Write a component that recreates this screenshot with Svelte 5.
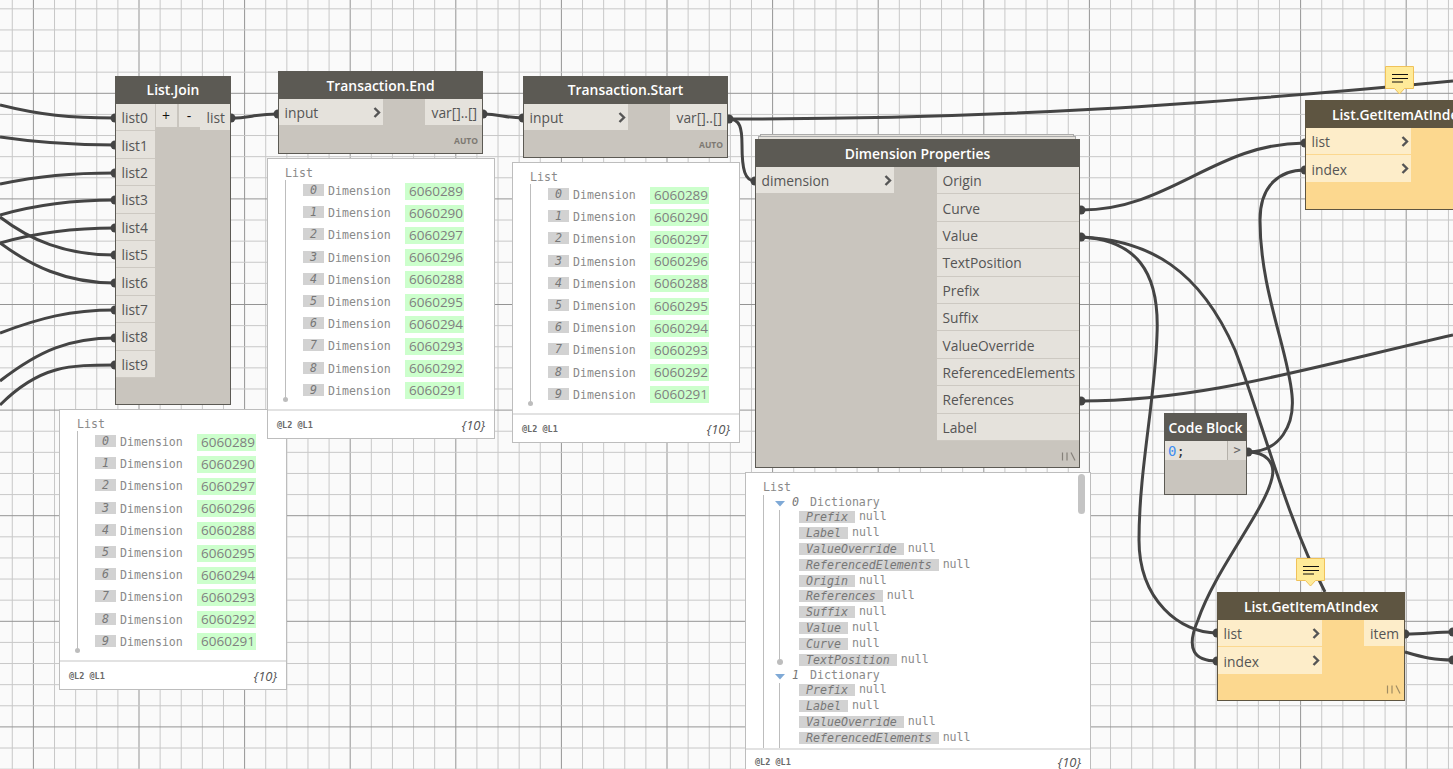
<script>
  const W = 1453, H = 769;
  const step = 21.12;
  const vLines = [];
  for (let k = -1; k < 70; k++) vLines.push({ p: 33.4 + step * k, major: k % 5 === 0 });
  const hLines = [];
  for (let k = -9; k < 29; k++) hLines.push({ p: 198.9 + step * k, major: k % 5 === 0 });

  const wires = [
    'M0,105 C40,115 70,118 115,118',
    'M0,137 C40,143 70,145 115,145',
    'M0,184 C40,176 70,173 115,173',
    'M0,215 C35,205 70,200 115,200',
    'M0,243 C35,233 70,228 115,228',
    'M0,217 C30,240 65,255 115,255',
    'M0,243 C30,265 65,283 115,283',
    'M0,333 C40,318 70,310 115,310',
    'M0,381 C40,350 70,338 115,338',
    'M0,405 C40,365 70,365 115,365',
    'M231,118 C250,118 255,114 278,114',
    'M483,114 C500,114 505,118 523,118',
    'M729,119 C1000,119 1200,105 1453,81',
    'M729,119 C740,119 742,128 742,145 C742,170 745,181 755,181',
    'M1081,210 C1170,210 1215,143 1305,143',
    'M1081,237 C1135,240 1160,270 1157,335 C1155,400 1139,470 1139,540 C1139,600 1180,633 1217,633',
    'M1081,237 C1150,240 1200,270 1235,350 C1262,420 1285,515 1325,592',
    'M1081,401 C1200,401 1300,370 1453,335',
    'M1248,452 C1280,452 1295,425 1292,395 C1288,350 1260,290 1260,220 C1260,185 1280,170 1305,170',
    'M1248,452 C1265,452 1276,462 1272,478 C1265,510 1215,570 1198,620 C1185,650 1195,661 1217,661',
    'M1405,634 C1425,634 1435,632 1453,632',
    'M1405,652 C1425,658 1435,660 1453,660'
  ];
  const dots = [
    [115,118],[115,145],[115,173],[115,200],[115,228],[115,255],[115,283],[115,310],[115,338],[115,365],
    [231,118],[278,114],[483,114],[523,118],[729,119],[755,181],[1081,210],[1081,237],[1081,401],
    [1305,143],[1305,170],[1248,452],[1217,633],[1217,661],[1405,634],[1453,632],[1453,660]
  ];

  const listJoin = ['list0','list1','list2','list3','list4','list5','list6','list7','list8','list9'];
  const dimOutputs = ['Origin','Curve','Value','TextPosition','Prefix','Suffix','ValueOverride','ReferencedElements','References','Label'];
  const values = ['6060289','6060290','6060297','6060296','6060288','6060295','6060294','6060293','6060292','6060291'];
  const keys = ['Prefix','Label','ValueOverride','ReferencedElements','Origin','References','Suffix','Value','Curve','TextPosition'];
  const firstKeys = keys.slice(0, 4);
  const listPreviews = [
    { x: 59, y: 409, w: 228 },
    { x: 267, y: 158, w: 228 },
    { x: 512, y: 162, w: 228 }
  ];
  const nodes = [
    { title: 'Transaction.End', x: 278, y: 71, w: 205, h: 83, inputs: ['input'], outputs: ['var[]..[]'], inW: 104, outW: 57, auto: true },
    { title: 'Transaction.Start', x: 523, y: 76, w: 205, h: 82, inputs: ['input'], outputs: ['var[]..[]'], inW: 104, outW: 57, auto: true, raised: true },
    { title: 'List.GetItemAtIndex', x: 1305, y: 100, w: 188, h: 110, inputs: ['list','index'], outputs: [], inW: 105, outW: 40, warm: true },
    { title: 'List.GetItemAtIndex', x: 1217, y: 592, w: 188, h: 109, inputs: ['list','index'], outputs: ['item'], inW: 104, outW: 40, warm: true, lacing: true }
  ];
  const notes = [{ x: 1385, y: 66 }, { x: 1296, y: 558 }];
</script>

{#snippet chevron()}
  <svg class="chev" width="8" height="11" viewBox="0 0 8 11"><path d="M1.5 1 L6 5.5 L1.5 10" /></svg>
{/snippet}

{#snippet lacing()}
  <svg class="lace" width="15" height="9" viewBox="0 0 15 9"><path d="M1.5 0.5 V8.5 M6 0.5 V8.5 M10 0.5 L14 8.5" /></svg>
{/snippet}

{#snippet footer()}
  <div class="pv-foot">
    <span class="levels"><span>@L2</span> <span>@L1</span></span>
    <span class="count">{'{10}'}</span>
  </div>
{/snippet}

<div class="canvas">
  <svg class="layer" width={W} height={H} viewBox="0 0 {W} {H}">
    {#each vLines as l}
      <line x1={l.p} x2={l.p} y1="0" y2={H} class={l.major ? 'major' : 'minor'} />
    {/each}
    {#each hLines as l}
      <line y1={l.p} y2={l.p} x1="0" x2={W} class={l.major ? 'major' : 'minor'} />
    {/each}
    {#each wires as d}
      <path class="wire" {d} />
    {/each}
    {#each dots as [cx, cy]}
      <circle class="dot" {cx} {cy} r="4.5" />
    {/each}
  </svg>

  <!-- List.Join -->
  <div class="node" style="left:115px;top:76px;width:116px;height:329px">
    <div class="title raised">List.Join</div>
    <div class="body">
      <div class="col" style="width:39px">
        {#each listJoin as p}<div class="port in plain"><span>{p}</span></div>{/each}
      </div>
      <div class="btns">
        <div class="btn">+</div>
        <div class="btn">-</div>
      </div>
      <div class="col" style="width:30px"><div class="port out">list</div></div>
    </div>
  </div>

  {#each nodes as n}
    <div class="node" class:warm={n.warm} style="left:{n.x}px;top:{n.y}px;width:{n.w}px;height:{n.h}px">
      <div class="title" class:raised={n.raised}>{n.title}</div>
      <div class="body">
        <div class="col" style="width:{n.inW}px">
          {#each n.inputs as p}<div class="port in"><span>{p}</span>{@render chevron()}</div>{/each}
        </div>
        {#if n.outputs.length}
          <div class="col" style="width:{n.outW}px">
            {#each n.outputs as p}<div class="port out">{p}</div>{/each}
          </div>
        {/if}
      </div>
      {#if n.auto}<div class="auto">AUTO</div>{/if}
      {#if n.lacing}{@render lacing()}{/if}
    </div>
  {/each}

  <!-- Dimension Properties -->
  <div class="stack s1"></div>
  <div class="stack s2"></div>
  <div class="node" style="left:755px;top:139px;width:325px;height:329px">
    <div class="title">Dimension Properties</div>
    <div class="body">
      <div class="col" style="width:138px">
        <div class="port in"><span>dimension</span>{@render chevron()}</div>
      </div>
      <div class="col" style="width:142px">
        {#each dimOutputs as p}<div class="port in plain"><span>{p}</span></div>{/each}
      </div>
    </div>
    {@render lacing()}
  </div>

  <!-- Code Block -->
  <div class="node code" style="left:1164px;top:413px;width:83px;height:82px">
    <div class="title">Code Block</div>
    <div class="code-row">
      <div class="code-text"><span class="zero">0</span>;</div>
      <div class="code-out">&gt;</div>
    </div>
  </div>

  {#each notes as n}
    <div class="note" style="left:{n.x}px;top:{n.y}px">
      <svg width="30" height="30" viewBox="0 0 30 30">
        <path class="note-bg" d="M0.5 0.5 H28.5 V22.5 H19.5 L14.5 28 L9.5 22.5 H0.5 Z" />
        <path class="note-lines" d="M7 8.5 H23 M7 12.5 H23 M7 16 H18" />
      </svg>
    </div>
  {/each}

  {#each listPreviews as p}
    <div class="preview" style="left:{p.x}px;top:{p.y}px;width:{p.w}px">
      <div class="pv-main">
        <div class="pv-list">List</div>
        <div class="rows">
          {#each values as v, i}
            <div class="row">
              <span class="idx">{i}</span>
              <span class="kind">Dimension</span>
              <span class="val">{v}</span>
            </div>
          {/each}
          <i class="bullet"></i>
        </div>
      </div>
      {@render footer()}
    </div>
  {/each}

  <!-- Dictionary preview -->
  <div class="preview dict">
    <div class="dict-main">
      <div class="thumb"></div>
      <div class="pv-list">List</div>
      <div class="dict-tree">
        {#each [0, 1] as g}
          <div class="group" class:last={g === 1}>
            <div class="group-head">
              <svg class="tri" width="10" height="6" viewBox="0 0 10 6"><path d="M0 0 H10 L5 5.5 Z" /></svg>
              <span class="gidx">{g}</span>
              <span class="gname">Dictionary</span>
            </div>
            {#each g === 0 ? keys : firstKeys as k}
              <div class="kv"><span class="key">{k}</span><span class="null">null</span></div>
            {/each}
            {#if g === 0}<i class="gdot"></i>{/if}
          </div>
        {/each}
      </div>
    </div>
    {@render footer()}
  </div>
</div>

<style>
  :global(body) { margin: 0; background: #fafafa; }
  .canvas {
    position: relative;
    width: 1453px;
    height: 769px;
    overflow: hidden;
    background: #fafafa;
    font-family: "Open Sans", sans-serif;
  }
  .layer { position: absolute; left: 0; top: 0; }
  .minor { stroke: #c8c8c8; stroke-width: 1; }
  .major { stroke: #949494; stroke-width: 1; }
  .wire { fill: none; stroke: #444; stroke-width: 3; }
  .dot { fill: #444; }

  .node {
    position: absolute;
    box-sizing: border-box;
    border: 1px solid #5c5a54;
    background: #c9c5be;
    display: flex;
    flex-direction: column;
  }
  .title {
    flex: none;
    height: 28px;
    margin: -1px -1px 0;
    background: #5c5a54;
    color: #fff;
    font-weight: 600;
    font-size: 13.9px;
    line-height: 29px;
    text-align: center;
    white-space: nowrap;
  }
  .title.raised { line-height: 27px; }
  .body { display: flex; justify-content: space-between; align-items: flex-start; }
  .col { display: flex; flex-direction: column; flex: none; }
  .port {
    box-sizing: border-box;
    height: 27.4px;
    background: #e5e2dc;
    border-bottom: 1px solid #c9c5be;
    color: #555;
    font-size: 13.8px;
    line-height: 28px;
    white-space: nowrap;
  }
  .port.in { padding-left: 5.5px; display: flex; justify-content: space-between; align-items: center; padding-right: 2px; }
  .port.in span { position: relative; top: 1px; }
  .port.out { text-align: right; padding-right: 5px; }
  .port.plain { border-bottom-color: #cdc9c2; }
  .chev { fill: none; flex: none; }
  .chev path { fill: none; stroke: #555; stroke-width: 2.4; }
  .btns { display: flex; gap: 2px; flex: none; }
  .btn {
    width: 21px;
    height: 23px;
    background: #e5e2dc;
    color: #111;
    font-size: 14px;
    line-height: 23px;
    text-align: center;
  }
  .auto {
    position: absolute;
    right: 4px;
    bottom: 7px;
    font-size: 8.5px;
    line-height: 10px;
    font-weight: 700;
    color: #7d7972;
  }
  .lace { position: absolute; right: 3px; bottom: 6px; fill: none; }
  .lace path { stroke: #85817a; stroke-width: 1.2; fill: none; }

  .warm { background: #fcd88f; border-color: #5e5541; }
  .warm .title { background: #5e5541; }
  .warm .port { background: #fdedc9; border-bottom-color: #fcd88f; }
  .warm .lace path { stroke: #a08c63; }

  .stack {
    position: absolute;
    box-sizing: border-box;
    background: #e5e2dc;
    border: 1px solid #aaa;
  }
  .s1 { left: 760px; top: 134px; width: 314px; height: 10px; }
  .s2 { left: 758px; top: 136px; width: 318px; height: 10px; }

  .code-row { display: flex; height: 19px; background: #e5e2dc; flex: none; }
  .code-text {
    flex: 1;
    padding-left: 3px;
    font-family: "DejaVu Sans Mono", monospace;
    font-size: 14px;
    line-height: 20px;
    color: #333;
  }
  .zero { color: #3f8ef0; }
  .code-out {
    width: 18px;
    border-left: 1px solid #b5b1aa;
    background: #dedbd5;
    font-family: "DejaVu Sans Mono", monospace;
    font-size: 12px;
    line-height: 18px;
    text-align: center;
    color: #666;
  }

  .note { position: absolute; width: 30px; height: 30px; }
  .note svg { display: block; }
  .note-bg { fill: #ffeb99; stroke: #f0c25a; stroke-width: 1; }
  .note-lines { stroke: #111; stroke-width: 1; fill: none; }

  .preview {
    position: absolute;
    box-sizing: border-box;
    background: #fff;
    border: 1px solid #bdbdbd;
    font-family: "DejaVu Sans Mono", monospace;
    font-size: 11.6px;
    color: #8a8a8a;
  }
  .pv-main { height: 250px; box-sizing: border-box; padding: 7px 0 0 17px; }
  .pv-list { height: 15px; line-height: 14px; color: #8a8a8a; }
  .rows { position: relative; border-left: 1px solid #bdbdbd; margin-top: -1px; height: 220px; padding-left: 17px; }
  .row { height: 22.2px; display: flex; align-items: center; white-space: nowrap; }
  .idx {
    width: 21px;
    height: 12px;
    line-height: 12px;
    background: #d2d2d2;
    text-align: center;
    font-style: italic;
    color: #777;
    margin-right: 4px;
    position: relative;
    top: -1px;
    flex: none;
  }
  .kind { width: 77px; flex: none; }
  .val {
    width: 59px;
    height: 17px;
    line-height: 17px;
    background: #ccffcc;
    font-family: "Open Sans", sans-serif;
    font-size: 13.5px;
    padding-left: 4px;
    box-sizing: border-box;
    color: #808080;
    flex: none;
  }
  .bullet {
    position: absolute;
    left: -3px;
    bottom: -2px;
    width: 5px;
    height: 5px;
    border-radius: 50%;
    background: #bdbdbd;
  }
  .pv-foot {
    height: 29px;
    box-sizing: border-box;
    border-top: 2px solid #e2e2e2;
    display: flex;
    justify-content: space-between;
    align-items: center;
    padding: 0 9px;
  }
  .levels { font-size: 8.5px; font-weight: 700; color: #6a6a6a; }
  .count { font-family: "Open Sans", sans-serif; font-style: italic; font-size: 13px; color: #555; }

  .dict { left: 745px; top: 472px; width: 346px; }
  .dict .pv-foot { height: 25px; }
  .dict-main { position: relative; height: 275px; box-sizing: border-box; padding: 7px 0 0 17px; overflow: hidden; }
  .thumb {
    position: absolute;
    right: 5px;
    top: 1px;
    width: 7px;
    height: 40px;
    border-radius: 4px;
    background: #c4c4c4;
  }
  .dict-tree { border-left: 1px solid #bdbdbd; height: 300px; padding-left: 11px; }
  .group { position: relative; height: 173px; }
  .group::before {
    content: "";
    position: absolute;
    left: 4px;
    top: 15px;
    bottom: 8px;
    width: 1px;
    background: #bdbdbd;
  }
  .group.last::before { bottom: 0; }
  .group-head { height: 14px; line-height: 14px; display: flex; align-items: center; position: relative; top: 0; }
  .tri { fill: #7fa9d6; flex: none; margin-right: 7px; position: relative; top: 2px; }
  .gidx { width: 18px; font-style: italic; color: #777; flex: none; }
  .kv { height: 15.9px; display: flex; align-items: center; padding-left: 24px; white-space: nowrap; }
  .key {
    height: 12px;
    line-height: 12px;
    padding: 0 7px;
    background: #d2d2d2;
    font-style: italic;
    color: #777;
    margin-right: 4px;
  }
  .null { position: relative; top: -1px; }
  .gdot {
    position: absolute;
    left: 2px;
    bottom: 3px;
    width: 6px;
    height: 6px;
    border-radius: 50%;
    background: #bdbdbd;
  }
</style>
